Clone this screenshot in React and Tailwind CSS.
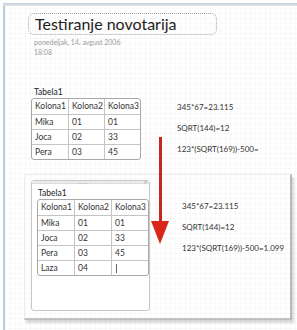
const rows1 = [
  ['Kolona1', 'Kolona2', 'Kolona3'],
  ['Mika', '01', '01'],
  ['Joca', '02', '33'],
  ['Pera', '03', '45'],
]

const rows2 = [...rows1, ['Laza', '04', '']]

function Table({ rows, widths, caret }) {
  return (
    <div className="rounded-[3px] border border-[#a8a8a8] overflow-hidden bg-white">
      {rows.map((row, i) => (
        <div key={i} className={`flex h-[15px] ${i > 0 ? 'border-t border-[#c4c4c4]' : ''}`}>
          {row.map((cell, j) => (
            <div
              key={j}
              style={{ width: widths[j] }}
              className={`flex items-center pl-[3px] text-[8.5px] text-[#333] leading-none ${j > 0 ? 'border-l border-[#c4c4c4]' : ''}`}
            >
              {cell}
              {caret && i === rows.length - 1 && j === 2 && (
                <span className="ml-[1px] w-px h-[9px] bg-[#666]" />
              )}
            </div>
          ))}
        </div>
      ))}
    </div>
  )
}

function Formulas({ last }) {
  return (
    <div className="flex flex-col gap-[13px] text-[8px] text-[#333] leading-[8px]">
      <span>345*67=23.115</span>
      <span>SQRT(144)=12</span>
      <span>{last}</span>
    </div>
  )
}

export default function App() {
  return (
    <div
      className="w-[297px] h-[330px] bg-white relative overflow-hidden"
      style={{ fontFamily: 'Lato, "Noto Sans", sans-serif' }}
    >
      <div className="absolute left-[3px] top-[3px] right-0 h-[3px] bg-gradient-to-b from-[#c4ccd8] to-[#e4e8ee]" />
      <div className="ml-[3px] mt-[3px] h-[327px] border-l-2 border-[#bccbe0] bg-[linear-gradient(#f8f8f9_1px,transparent_1px),linear-gradient(90deg,#f8f8f9_1px,transparent_1px)] bg-[size:5px_5px] pt-[10px]">
        {/* title */}
        <div className="ml-[23px] w-[189px] h-[22px] rounded-[6px] border border-dotted border-[#a8a8a8] flex items-center pl-[6px]">
          <span className="text-[16px] text-[#222] leading-none">Testiranje novotarija</span>
        </div>
        <div className="ml-[29px] mt-[2px] text-[7px] leading-[10px] text-[#9a9a9a]">
          <div>ponedeljak, 14. avgust 2006</div>
          <div>18:08</div>
        </div>

        {/* upper example */}
        <div className="flex mt-[29px] ml-[26px]">
          <div className="w-[110px]">
            <div className="ml-[3px] text-[8.5px] text-[#222] leading-[12px]">Tabela1</div>
            <Table rows={rows1} widths={[36, 36, 36]} />
          </div>
          <div className="ml-[36px] mt-[17px]">
            <Formulas last="123*(SQRT(169))-500=" />
          </div>
        </div>

        {/* lower example */}
        <div className="ml-[19px] mt-[14px] w-[268px] h-[146px] border-t border-l border-[#ececec] border-r-2 border-b-2 border-r-[#b8b8b8] border-b-[#c0c0c0] shadow-[2px_3px_2px_rgba(0,0,0,0.15)] flex pt-[5px] pl-[6px]">
          <div className="w-[119px] h-[131px] rounded-[3px] border border-[#c8c8c8] bg-white relative pt-[6px] pl-[5px]">
            <div className="absolute top-0 left-0 right-0 h-[3px] bg-[#ececec] border-b border-[#dcdcdc]" />
            <div className="absolute top-[-1px] left-[46px] text-[5px] text-[#999] leading-none tracking-[0.5px]">......</div>
            <div className="absolute top-[-3px] right-[2px] text-[7px] text-[#999] leading-none">»</div>
            <div className="ml-[1px] text-[8.5px] text-[#222] leading-[12px]">Tabela1</div>
            <Table rows={rows2} widths={[36, 37, 37]} caret />
          </div>
          <div className="ml-[32px] mt-[22px]">
            <Formulas last="123*(SQRT(169))-500=1.099" />
          </div>
        </div>
      </div>

      {/* red arrow */}
      <svg className="absolute left-[150px] top-[137px]" width="20" height="108" viewBox="0 0 20 108">
        <rect x="9" y="0" width="3" height="90" fill="#c8281c" />
        <path d="M1 84 L19 84 L10 107 Z" fill="#d8261a" />
      </svg>
    </div>
  )
}
